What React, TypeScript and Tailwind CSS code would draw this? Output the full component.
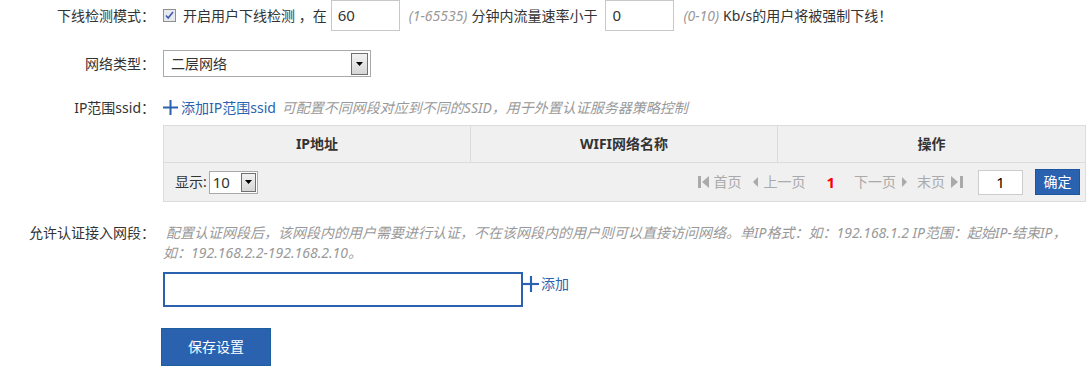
import React from "react";

const font = "font-['Noto_Sans','Noto_Sans_CJK_SC',sans-serif]";

const Label = ({ children }: { children: React.ReactNode }) => (
  <div className="w-[155px] shrink-0 text-right whitespace-nowrap">{children}</div>
);

const Plus = ({ size = 15 }: { size?: number }) => (
  <svg width={size} height={size} viewBox="0 0 15 15">
    <rect x="6.5" y="0" width="2" height="15" fill="#2a62b0" />
    <rect x="0" y="6.5" width="15" height="2" fill="#2a62b0" />
  </svg>
);

const DropBtn = () => (
  <span className="flex items-center justify-center w-[17px] h-[22px] border border-[#707070] bg-gradient-to-b from-[#f2f2f2] to-[#d6d6d6]">
    <svg width="7" height="4" viewBox="0 0 7 4">
      <path d="M0 0h7L3.5 4z" fill="#000" />
    </svg>
  </span>
);

export default function App() {
  return (
    <div className={`w-[1091px] h-[381px] bg-white text-[14px] text-[#333] leading-none overflow-hidden ${font}`}>
      {/* 下线检测 */}
      <div className="flex items-center h-[31px]">
        <Label>下线检测模式：</Label>
        <div className="ml-2 flex items-center whitespace-nowrap">
          <span className="flex items-center justify-center w-[13px] h-[13px] border border-[#8f8f8f] bg-[#e8e8ef]">
            <svg width="9" height="9" viewBox="0 0 9 9">
              <path d="M1 4.5l2.2 2.5L8 1" stroke="#3b5bab" strokeWidth="1.6" fill="none" />
            </svg>
          </span>
          <span className="ml-[7px]">开启用户下线检测 ，在</span>
          <span className="ml-[4px] flex items-center w-[69px] h-[31px] border border-[#c8c8c8] px-[6px] text-[15px]">60</span>
          <span className="ml-[9px] italic text-[#999]">(1-65535)</span>
          <span className="ml-1">分钟内流量速率小于</span>
          <span className="ml-[8px] flex items-center w-[69px] h-[31px] border border-[#c8c8c8] px-[6px] text-[15px]">0</span>
          <span className="ml-[9px] italic text-[#999]">(0-10)</span>
          <span className="ml-1">Kb/s的用户将被强制下线！</span>
        </div>
      </div>

      {/* 网络类型 */}
      <div className="flex items-center mt-[19px] h-[27px]">
        <Label>网络类型：</Label>
        <div className="ml-2 flex items-center justify-between w-[208px] h-[27px] border border-[#a9a9a9] pl-[7px] pr-[2px]">
          <span>二层网络</span>
          <DropBtn />
        </div>
      </div>

      {/* IP范围ssid */}
      <div className="flex items-center mt-[22px] h-[17px]">
        <Label>IP范围ssid：</Label>
        <div className="ml-2 flex items-center whitespace-nowrap">
          <Plus />
          <span className="ml-[3px] text-[#2a62b0]">添加IP范围ssid</span>
          <span className="ml-[6px] italic text-[#999]">可配置不同网段对应到不同的SSID，用于外置认证服务器策略控制</span>
        </div>
      </div>

      <div className="ml-[163px] mt-[9px] w-[923px] border border-[#dcdcdc] bg-[#f0f0f0]">
        <div className="grid grid-cols-3 h-[37px] font-bold border-b border-[#dcdcdc]">
          <div className="flex items-center justify-center border-r border-[#dcdcdc]">IP地址</div>
          <div className="flex items-center justify-center border-r border-[#dcdcdc]">WIFI网络名称</div>
          <div className="flex items-center justify-center">操作</div>
        </div>
        <div className="flex items-center h-[38px] pl-[11px] pr-[5px]">
          <span>显示:</span>
          <div className="ml-[2px] flex items-center justify-between w-[49px] h-[23px] border border-[#a9a9a9] bg-white pl-[3px] pr-[1px] text-[15px]">
            <span>10</span>
            <span className="flex items-center justify-center w-[15px] h-[19px] border border-[#707070] bg-gradient-to-b from-[#f2f2f2] to-[#d6d6d6]">
              <svg width="7" height="4" viewBox="0 0 7 4">
                <path d="M0 0h7L3.5 4z" fill="#000" />
              </svg>
            </span>
          </div>
          <div className="ml-auto flex items-center text-[#aaa]">
            <svg width="14" height="12" viewBox="0 0 14 12">
              <rect x="0" y="0" width="3" height="12" fill="#aaa" />
              <path d="M11 0v12L4 6z" fill="#aaa" />
            </svg>
            <span className="ml-[1px]">首页</span>
            <svg className="ml-[12px]" width="5" height="10" viewBox="0 0 5 10">
              <path d="M5 0v10L0 5z" fill="#aaa" />
            </svg>
            <span className="ml-[5px]">上一页</span>
            <span className="ml-[21px] text-[#f00] font-bold text-[15px]">1</span>
            <span className="ml-[19px]">下一页</span>
            <svg className="ml-[6px]" width="5" height="10" viewBox="0 0 5 10">
              <path d="M0 0v10L5 5z" fill="#aaa" />
            </svg>
            <span className="ml-[10px]">末页</span>
            <svg className="ml-[6px]" width="13" height="12" viewBox="0 0 13 12">
              <path d="M0 0v12L7 6z" fill="#aaa" />
              <rect x="9" y="0" width="3" height="12" fill="#aaa" />
            </svg>
            <span className="ml-[14px] flex items-center justify-center w-[45px] h-[25px] border border-[#ccc] bg-white text-black text-[15px]">1</span>
            <span className="ml-[12px] flex items-center justify-center w-[45px] h-[26px] bg-[#2a62b0] border border-[#1d56a0] text-white">确定</span>
          </div>
        </div>
      </div>

      {/* 允许认证接入网段 */}
      <div className="flex mt-[21px] leading-[20px]">
        <Label>允许认证接入网段：</Label>
        <div className="ml-2 italic text-[#999] whitespace-nowrap">
          <div className="pl-[3px]">配置认证网段后，该网段内的用户需要进行认证，不在该网段内的用户则可以直接访问网络。单IP格式：如：192.168.1.2 IP范围：起始IP-结束IP，</div>
          <div>如：192.168.2.2-192.168.2.10。</div>
        </div>
      </div>
      <div className="ml-[163px] mt-[9px] flex items-start">
        <div className="w-[360px] h-[35px] border-2 border-[#2a62b0] bg-white" />
        <div className="flex items-center mt-[4px]">
          <Plus size={16} />
          <span className="ml-[2px] text-[#2a62b0]">添加</span>
        </div>
      </div>

      <div className="ml-[161px] mt-[21px] flex items-center justify-center w-[110px] h-[38px] bg-[#2a62b0] border border-[#1d5e9e] text-white">
        保存设置
      </div>
    </div>
  );
}
